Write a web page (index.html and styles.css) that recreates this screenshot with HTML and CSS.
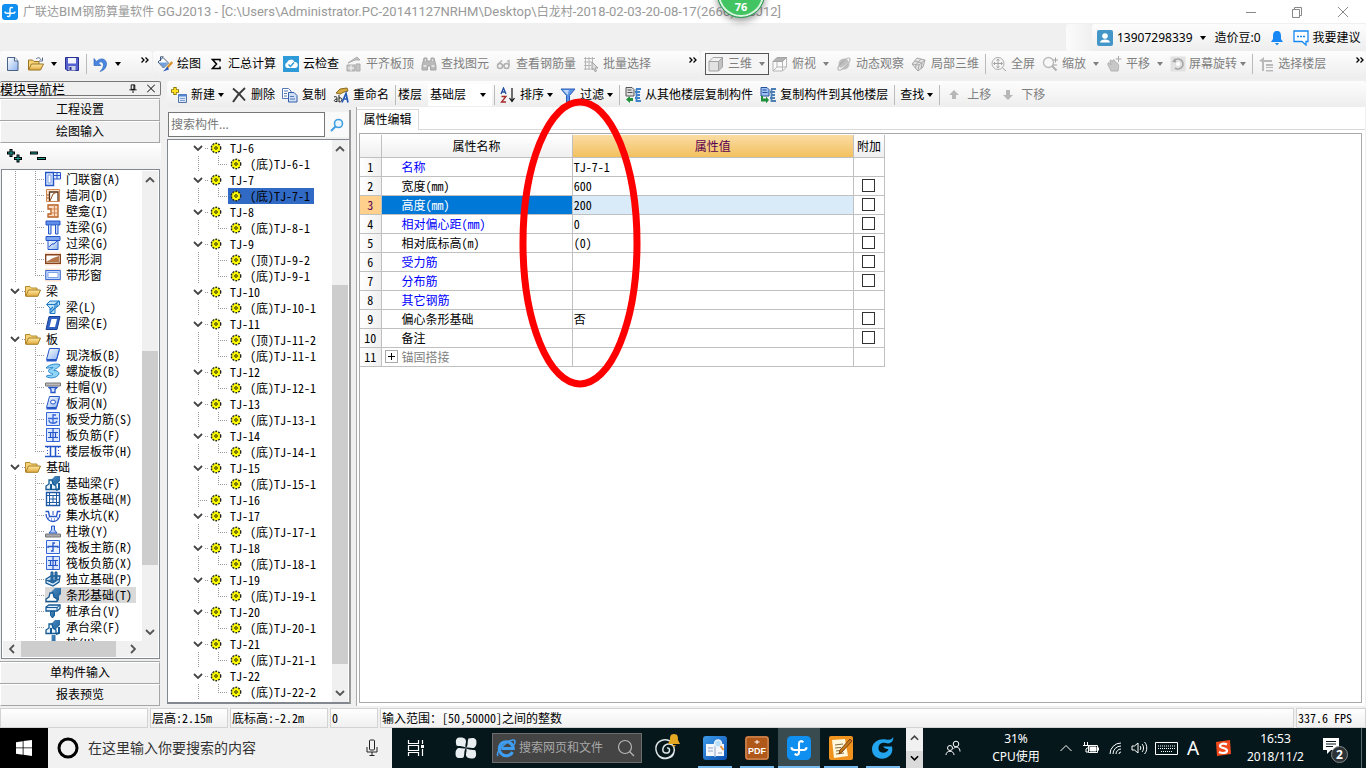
FILE: index.html
```html
<!DOCTYPE html>
<html lang="zh-CN">
<head>
<meta charset="utf-8">
<title>广联达BIM钢筋算量软件 GGJ2013</title>
<link rel="stylesheet" href="styles.css">
</head>
<body>
<svg class="sprite" aria-hidden="true">
  <defs>
    <linearGradient id="gBlue" x1="0" y1="0" x2="1" y2="1"><stop offset="0" stop-color="#fff"/><stop offset="1" stop-color="#8db4ee"/></linearGradient>
    <linearGradient id="gFold" x1="0" y1="0" x2="0" y2="1"><stop offset="0" stop-color="#ffe9a3"/><stop offset="1" stop-color="#e0a93c"/></linearGradient>
    <linearGradient id="gSteel" x1="0" y1="0" x2="1" y2="1"><stop offset="0" stop-color="#4f8fc4"/><stop offset="1" stop-color="#155a94"/></linearGradient>
    <linearGradient id="gPage" x1="0" y1="0" x2="1" y2="1"><stop offset="0" stop-color="#3d9be9"/><stop offset="1" stop-color="#0a4fb0"/></linearGradient>
  </defs>
  <symbol id="logo" viewBox="0 0 16 16"><rect width="16" height="16" rx="3" fill="#0f8ff0"/><path d="M10.800 4.200C10 3 8 3.200 8 5v6c0 1.800-2 2-2.800.800M3 7.500c0 1.200.800 1.800 2 1.800h6c1.200 0 2-.600 2-1.800" fill="none" stroke="#fff" stroke-width="1.400"/></symbol>
  <symbol id="new-doc" viewBox="0 0 16 16"><path d="M2.500 1.500h7.500l3 3.500v9.500H2.500z" fill="url(#gBlue)" stroke="#4a6186"/><path d="M9.500 1.500V5H13" fill="#fff" stroke="#4a6186"/></symbol>
  <symbol id="open" viewBox="0 0 16 16"><path d="M.500 14V4h4l1.500 1.500h5V8" fill="#f6d377" stroke="#9a7424"/><path d="M.500 14 3.500 8H15.500l-3 6z" fill="url(#gFold)" stroke="#9a7424"/><path d="M8 3c2-2 4-1.500 5 1M14.500 1.500V5H11" fill="none" stroke="#566d8e"/></symbol>
  <symbol id="folder" viewBox="0 0 16 16"><path d="M.500 13V3.500h4.500L6.500 5H12v3" fill="#f6d377" stroke="#b48a2e"/><path d="M.800 13.300 3.500 7H15.500L12.800 13.300z" fill="url(#gFold)" stroke="#a67c22"/></symbol>
  <symbol id="save" viewBox="0 0 16 16"><path d="M1.500 1.500h13v13H3L1.500 13z" fill="#5561cf" stroke="#26308f"/><path d="M4 2h8v5.500H4z" fill="#f4f6ff"/><path d="M4.500 10h7v4.500h-7z" fill="#cdd3e8"/><path d="M5.500 11h2v3h-2z" fill="#26308f"/></symbol>
  <symbol id="undo" viewBox="0 0 16 16"><path d="M4.500 5.500C8 1 15 2.500 14.500 8.500 14 12.500 11.500 14.500 8 15.500 12 12 12.500 7 9.500 6 8.500 5.600 7.500 6 6.800 7.300L9 9.500H2V2.500z" fill="#4a86e0" stroke="#225db5" stroke-width=".6"/></symbol>
  <symbol id="paint" viewBox="0 0 16 16"><path d="M1 6 6 1.500 11.500 7 6.500 12z" fill="#fff" stroke="#41587c"/><path d="M2 6.500h9L6.500 11.500z" fill="#6f9fdd"/><path d="M3.500 5V.800h3" fill="none" stroke="#41587c"/><path d="M15.200 6 10 12" stroke="#d9952a" stroke-width="2.400"/><path d="M10.500 10.500 6 15.500l6-2z" fill="#2b5ec0"/></symbol>
  <symbol id="sigma" viewBox="0 0 16 16"><path d="M12 5.500V3.500H4.500l4 4.500-4 4.500H12v-2" fill="none" stroke="#000" stroke-width="1.600"/></symbol>
  <symbol id="cloud" viewBox="0 0 16 16"><rect width="16" height="16" fill="#2e9ad8"/><path d="M4 12a3 3 0 0 1 0-5.500A4 4 0 0 1 11.500 6 3 3 0 0 1 12 12z" fill="#fff"/><path d="m5.500 8.500 2 2 3.500-4" fill="none" stroke="#2e9ad8" stroke-width="1.400"/></symbol>
  <symbol id="align" viewBox="0 0 16 16"><path d="M1 9h8v6H1zM2 7l9-6 3 3H9zM10 8h4v7h-4z" fill="#c4c4c4" stroke="#ababab"/><path d="M2 12h6M5 9v6" stroke="#f5f5f5"/></symbol>
  <symbol id="binoc" viewBox="0 0 16 16"><path d="M3 2h3v3h4V2h3l2 8v4H9.500v-4h-3v4H1v-4z" fill="#b9b9b9" stroke="#a5a5a5"/><path d="M2.500 10h3M10.500 10h3M4 4h1M11 4h1" stroke="#eee" stroke-width="1.500"/></symbol>
  <symbol id="glasses" viewBox="0 0 16 16"><circle cx="4" cy="10" r="2.500" fill="none" stroke="#b0b0b0" stroke-width="1.500"/><circle cx="10.500" cy="10" r="2.500" fill="none" stroke="#b0b0b0" stroke-width="1.500"/><path d="M1.800 8.500 6 4.500M6.500 9.500h2M13 9.500V4.500l-2 1" fill="none" stroke="#b0b0b0" stroke-width="1.300"/></symbol>
  <symbol id="batch" viewBox="0 0 16 16"><path d="M1 2.500h11M1 6h9M1 9.500h7M1 13h7M2.500 1v13M6 1v13M9.500 1v6" stroke="#b5b5b5" fill="none"/><path d="m9 6 6 6h-3l1.500 3-1.500.5-1.500-3L9 14z" fill="#ddd" stroke="#9e9e9e"/></symbol>
  <symbol id="cube" viewBox="0 0 16 16"><path d="M1 5.500h9.500V15H1z" fill="#e2e2e2" stroke="#a3a3a3"/><path d="M1 5.500 5 1.500h9.500l-4 4z" fill="#f1f1f1" stroke="#a3a3a3"/><path d="M10.500 5.500l4-4V11l-4 4z" fill="#c2c2c2" stroke="#a3a3a3"/></symbol>
  <symbol id="cubetop" viewBox="0 0 16 16"><path d="M1 5.500h9.500V15H1zM10.500 5.500l4-4V11l-4 4zM5 5v6M1 15l4-4h9" fill="#fafafa" stroke="#b5b5b5"/><path d="M1 5.500 5 1.500h9.500l-4 4z" fill="#b2b2b2" stroke="#a3a3a3"/></symbol>
  <symbol id="orbit" viewBox="0 0 16 16"><circle cx="8" cy="8" r="5.500" fill="#bfbfbf"/><path d="M3 13c3 0 9-4 11-9" fill="none" stroke="#f5f5f5" stroke-width="1.600"/><ellipse cx="8" cy="8" rx="8" ry="2.600" transform="rotate(-45 8 8)" fill="none" stroke="#aaa"/></symbol>
  <symbol id="local3d" viewBox="0 0 16 16"><path d="m1 8 5-6 8 2-2 7-5 4z" fill="#e3e3e3" stroke="#a9a9a9"/><path d="m1 8 7 1 6-5M8 9l-1 6M3.500 5l7 2M10 3 5 8.500l-.5 4M11 7l-1 6" fill="none" stroke="#a9a9a9"/></symbol>
  <symbol id="fullview" viewBox="0 0 16 16"><circle cx="7" cy="7.500" r="6" fill="#f5f5f5" stroke="#adadad"/><path d="M7 3v9M2.500 7.500h9M5.500 4.500 7 3l1.500 1.500M5.500 10.500 7 12l1.500-1.500M4 6 2.500 7.500 4 9M10 6l1.500 1.500L10 9M11.500 12l3.500 3" fill="none" stroke="#a3a3a3"/></symbol>
  <symbol id="zoomer" viewBox="0 0 16 16"><circle cx="6.500" cy="6.500" r="5" fill="#f8f8f8" stroke="#bababa" stroke-width="1.300"/><path d="m10 10 4.500 4.500" stroke="#b0b0b0" stroke-width="2"/><path d="M11 4h5M13.500 1.500v5M11 9h4" stroke="#a3a3a3"/></symbol>
  <symbol id="hand" viewBox="0 0 16 16"><path d="M2 7c1-1 2 0 3 2L4 4.500c1-1 2 0 2.500 1.500L7 4c1-.5 2 .5 2 2l2 1c2 1 2 3 1 8H5C4 12 1 9 2 7z" fill="#c8c8c8" stroke="#b1b1b1"/><path d="M12.500 0v6M9.500 3h6" stroke="#aaa"/></symbol>
  <symbol id="rotate" viewBox="0 0 16 16"><rect x=".5" y=".5" width="15" height="15" fill="#e2e2e2"/><path d="M4 5a5 5 0 1 1 1 7" fill="none" stroke="#a7a7a7" stroke-width="1.600"/><path d="m2 6 3-4 1.500 4.500z" fill="#a7a7a7"/><circle cx="8" cy="8" r="2" fill="#fff"/></symbol>
  <symbol id="floors" viewBox="0 0 16 16"><path d="m1 5 5-4v3h8v2H6v9H4V6zM8 8h7v2H8zM8 11h7v1H8zM8 14h7v1.500H8z" fill="#b9b9b9"/></symbol>
  <symbol id="add-item" viewBox="0 0 16 16"><path d="M4 0v8M0 4h8" stroke="#8d7a00" stroke-width="3.400"/><path d="M4 1v6M1 4h6" stroke="#ffe324" stroke-width="1.800"/><path d="M7.500 7.500h8v8h-8z" fill="#dbe8fb" stroke="#5574a5"/><path d="M7.500 7.500h8v2h-8z" fill="#5486d8"/><path d="M9 11.500h5M9 13.500h5" stroke="#7d9dd0"/></symbol>
  <symbol id="del" viewBox="0 0 16 16"><path d="M2 1.500c4 3 8 7 12 12M14 1C8 6 5 10 2 15" fill="none" stroke="#3b3b3b" stroke-width="2"/></symbol>
  <symbol id="copy" viewBox="0 0 16 16"><path d="M.500 1.500h6L9 4v7.500H.500z" fill="#fff" stroke="#5479b8"/><path d="M6.500 5.500h5.500l3 3v6.500H6.500z" fill="#cfdff7" stroke="#345fa8"/><path d="M2 4h4M2 6.500h3M2 9h3M8 9.500h4M8 12h5" stroke="#5479b8"/></symbol>
  <symbol id="rename" viewBox="0 0 16 16"><path d="M3 6 7 2l7-1 1 3-4 1-4 2z" fill="#d6a941" stroke="#8a6b22"/><path d="M1 10c2-1 3 0 3 1v4M4 12c-3 0-4 3 0 2.500M6 8v7M6 11c4-1 4 4 0 4" fill="none" stroke="#222"/><path d="m9 15.500 4-9 2 9M10.500 12h4" fill="none" stroke="#2459b8" stroke-width="1.700"/></symbol>
  <symbol id="sort" viewBox="0 0 16 16"><path d="m1 7 2.500-6L6 7M2 5h3" fill="none" stroke="#234fa3" stroke-width="1.300"/><path d="M1.500 9.500H6L1.500 15H6" fill="none" stroke="#a52828" stroke-width="1.300"/><path d="M12 1v13M9.500 11l2.500 3.500 2.500-3.500" fill="none" stroke="#111" stroke-width="1.200"/></symbol>
  <symbol id="filter" viewBox="0 0 16 16"><path d="M1 2h14L9.500 8.500V14L6.500 15.500v-7z" fill="#5b93e8" stroke="#2a5db5"/><path d="M3 3h6L7.500 8z" fill="#bcd6fb"/></symbol>
  <symbol id="copyfrom" viewBox="0 0 16 16"><path d="M1 .5h6l2 2V9H1z" fill="#ddd" stroke="#555"/><path d="M2.500 3h4M2.500 5.500h5" stroke="#555"/><path d="M11 2h5M10 5h5M11 8h4M10 11h5M11 14h5M11.500 2v13" stroke="#3f83cc" stroke-width="1.800"/><path d="m1 12.500 4-3.500v2h3v3H5v2z" fill="#1e8f3b"/></symbol>
  <symbol id="copyto" viewBox="0 0 16 16"><path d="M1 .5h6l2 2V9H1z" fill="#9fc0f2" stroke="#234e98"/><path d="M2.500 3h4M2.500 5.500h5" stroke="#234e98"/><path d="M11 2h5M10 5h5M11 8h4M10 11h5M11 14h5M11.500 2v13" stroke="#4d7fb5" stroke-width="1.800"/><path d="m9 13-3-3.500v2H3V9H1v5.500h5v2z" fill="#1e8f3b"/></symbol>
  <symbol id="up" viewBox="0 0 10 10"><path d="m5 0 5 5H7v4H3V5H0z" fill="#b8b8b8"/></symbol>
  <symbol id="down" viewBox="0 0 10 10"><path d="m5 10 5-5H7V0H3v5H0z" fill="#b8b8b8"/></symbol>
  <symbol id="caret" viewBox="0 0 6 4"><path d="M0 0h6L3 4z" fill="currentColor"/></symbol>
  <symbol id="more" viewBox="0 0 8 6"><path d="m.500.500 2.500 2.500L.500 5.500M4.500.500 7 3 4.500 5.500" fill="none" stroke="#000" stroke-width="1.300"/></symbol>
  <symbol id="chev" viewBox="0 0 10 6"><path d="m1 1 4 4 4-4" fill="none" stroke="currentColor" stroke-width="1.800"/></symbol>
  <symbol id="gear" viewBox="0 0 16 16"><circle cx="8" cy="8" r="4.700" fill="#ff0" stroke="#222" stroke-width="1.400" stroke-dasharray="1.800 1.200"/><path d="M8 3v10M3 8h10M4.500 4.500l7 7M11.500 4.500l-7 7" stroke="#333" stroke-width=".7" stroke-dasharray="1.400 8"/><circle cx="8" cy="8" r="2.900" fill="#ff0"/><circle cx="8" cy="8" r="1.300" fill="#ff0" stroke="#111" stroke-width=".9"/></symbol>
  <symbol id="user" viewBox="0 0 16 16"><rect width="16" height="16" rx="2" fill="#4496c8"/><circle cx="8" cy="6" r="2.800" fill="#fff"/><path d="M3 12.500c0-4 10-4 10 0z" fill="#fff"/></symbol>
  <symbol id="bell" viewBox="0 0 14 16"><path d="M7 1c3 0 4 2 4 5v3l2 3H1l2-3V6c0-3 1-5 4-5z" fill="#1787f4"/><path d="M5 13h4l-2 2.500z" fill="#1787f4"/></symbol>
  <symbol id="chat" viewBox="0 0 16 16"><path d="M1 1h14v10.500h-2V15l-4-3.500H1z" fill="#fff" stroke="#1787f4" stroke-width="1.300"/><path d="M4 6.500h2M7 6.500h2M10 6.500h2" stroke="#1787f4" stroke-width="1.500"/></symbol>
  <symbol id="door" viewBox="0 0 16 16"><path d="M.500 1.500h8v13h-8z" fill="#dbe8ff" stroke="#2456c8" stroke-width="1.500"/><path d="M3 4h3v8H3z" fill="#fff" stroke="#789fe4"/><path d="M9 1.500h6.500V8H9M12 1.500V8M9 4.500h6.500" fill="#dbe8ff" stroke="#2456c8"/></symbol>
  <symbol id="hole" viewBox="0 0 16 16"><path d="M1.500 2.500h13v12h-13z" fill="#ffe2ca" stroke="#d08650"/><path d="M4.500 14V5h8.500v9" fill="#fff" stroke="#56351c" stroke-width="1.300"/><path d="m5 14 3-7 4-2M2 8h2M2 11h2" fill="none" stroke="#935020"/></symbol>
  <symbol id="niche" viewBox="0 0 16 16"><path d="M3 2h10v12H3v-3h3V6H3z" fill="#fbdcc3" stroke="#b65d20" stroke-width="1.300"/><path d="M9.500 2v12M6 6h7M6 10h7" stroke="#d28550"/></symbol>
  <symbol id="lbeam" viewBox="0 0 16 16"><path d="M1 2h14v4H1z" fill="#5f8de8" stroke="#2456c8"/><path d="M3.500 6v9h2.500V6M10.500 6v9h2.500V6" fill="#c3d8fb" stroke="#2456c8"/></symbol>
  <symbol id="gbeam" viewBox="0 0 16 16"><path d="M1 1.500h14v4H1z" fill="#7ea6f0" stroke="#2456c8"/><path d="M3 5.500h10v9H3z" fill="url(#gBlue)" stroke="#2456c8"/><path d="m4 12 3-3 2 0 3-3" fill="none" stroke="#2456c8"/></symbol>
  <symbol id="striphole" viewBox="0 0 16 16"><path d="M0 1.500h16v13H0z" fill="#ffe1d0"/><path d="M.700 3.700h14.600v8.600H.700z" fill="#fff" stroke="#87441c" stroke-width="1.400"/><path d="M1 11 8 7l6-2v6z" fill="#b5764a"/></symbol>
  <symbol id="stripwin" viewBox="0 0 16 16"><path d="M0 1.500h16v13H0z" fill="#ffe1d0"/><path d="M.700 3.500h14.600v9H.700z" fill="#c4d8fb" stroke="#3b6ad2"/><path d="M3 5.500h10v5H3z" fill="#fff" stroke="#7ea2e8"/></symbol>
  <symbol id="beam" viewBox="0 0 16 16"><path d="M1.500 5.500 5 2h9.500v4L10 9.500v5H5V9z" fill="#bfe3fb" stroke="#1d79c4"/><path d="M2 5.500h8L14 2M10 5.500v4M5 14 10 9M5 11l3-3M12 4v4" fill="none" stroke="#1d79c4" stroke-width="1.200"/></symbol>
  <symbol id="ring" viewBox="0 0 16 16"><path d="M4 1.500h11l-3 13H1z" fill="#2f62c4" stroke="#173f96"/><path d="M6.500 4H12l-2 8H4.500z" fill="#fff"/></symbol>
  <symbol id="slab" viewBox="0 0 16 16"><path d="M4.500 1.500h10l-3 11h-10z" fill="url(#gBlue)" stroke="#2456c8"/><path d="M1.500 12.500v2h10l3-10v-3l-3 11z" fill="#2456c8"/></symbol>
  <symbol id="spiral" viewBox="0 0 16 16"><path d="M1 5c3-4 12-5 14-3-1 3-6 4-6 5.500 3 0 5 1 5 3.500-2 4-9 5-13 2.500 1-2 5-.5 7-2C7 10 2 10 4 6.500c2-1 4-1 4-2C6 4 4 5.500 1 5z" fill="#8fd4f7" stroke="#2b87cc"/></symbol>
  <symbol id="cap" viewBox="0 0 16 16"><path d="M.500 4h15v3H.500z" fill="#bbb" stroke="#777"/><path d="m4 8.500 2 2v3h4v-3l2-2z" fill="#dce8ff" stroke="#2456c8" stroke-width="1.300"/></symbol>
  <symbol id="slabhole" viewBox="0 0 16 16"><path d="M4.500 1.500h10l-3 11h-10z" fill="url(#gBlue)" stroke="#2456c8"/><path d="M1.500 12.500v2h10l3-10v-3l-3 11z" fill="#2456c8"/><ellipse cx="8" cy="7" rx="2.500" ry="2" fill="#fff" stroke="#2456c8"/></symbol>
  <symbol id="rebar1" viewBox="0 0 16 16"><path d="M1.500 1.500h13v13h-13z" fill="#dce8ff" stroke="#3567d8"/><path d="M3 7.500h10M8 3v10M4 9c0 4 7 4 8 1M8 4h3" fill="none" stroke="#3567d8" stroke-width="1.300"/></symbol>
  <symbol id="rebar2" viewBox="0 0 16 16"><path d="M1.500 1.500h13v13h-13z" fill="#dce8ff" stroke="#3567d8"/><path d="M3 5.500h10M3 10.500h10M5.500 5v6M10.500 5v6M8 1v14" fill="none" stroke="#2456c8" stroke-width="1.200"/></symbol>
  <symbol id="rebar3" viewBox="0 0 16 16"><path d="M1.500 1.500h13v13h-13z" fill="#e8f0ff" stroke="#3567d8"/><path d="M10 4H8v8H6M3 9V7.500h10V9" fill="none" stroke="#2456c8" stroke-width="1.300"/></symbol>
  <symbol id="band" viewBox="0 0 16 16"><path d="M0 3.500h16M0 13.500h16" stroke="#2456c8" stroke-width="1.500"/><path d="M5.500 4v9M10.500 4v9" stroke="#2456c8" stroke-width="1.500"/><path d="M2.500 4v9M13.500 4v9" stroke="#2456c8" stroke-dasharray="1 2"/></symbol>
  <symbol id="fbeam" viewBox="0 0 16 16"><path d="M5 6 10 1h5v5l-4 4v4H5z" fill="url(#gSteel)"/><path d="M1 14.500V11l3-2V5h3l1 4 3 2v3.500z" fill="#e9f3fc" stroke="#155a94" stroke-width="1.300"/><path d="M6 9v5M14 8v6l-3 1" fill="none" stroke="#155a94" stroke-width="2"/></symbol>
  <symbol id="raft" viewBox="0 0 16 16"><path d="M1.500 1.500h13v13h-13z" fill="#fff" stroke="#1d5aa6" stroke-width="1.400"/><path d="M4.500 4.500h7v7h-7zM4.500 1v14M11.500 1v14M1 4.500h14M1 11.500h14M8 5v6M5 8h6" fill="none" stroke="#1d5aa6"/></symbol>
  <symbol id="pit" viewBox="0 0 16 16"><path d="M.500 4.500h3l1 5h7l1-5h3M1 7c0 10 14 10 14 0" fill="none" stroke="#2456c8" stroke-width="1.300"/><path d="M3 11h1M6 12h1M9 12h1M12 11h1M6 14h1M9 14h1M8 8V4" stroke="#2456c8"/></symbol>
  <symbol id="pier" viewBox="0 0 16 16"><path d="M.500 11h15v3H.500z" fill="#aaa" stroke="#777"/><path d="M6.500 3h3v4l2.500 3H4l2.500-3z" fill="#b8d0fa" stroke="#2456c8"/></symbol>
  <symbol id="isolated" viewBox="0 0 16 16"><path d="M1 8 6 5h9l-1 6-6 4-7-3z" fill="#cfe4f7" stroke="#155a94" stroke-width="1.300"/><path d="M6 1h2v8H6zM10 1h2v7h-2zM1 9l7 3 6-4" fill="url(#gSteel)" stroke="#155a94"/></symbol>
  <symbol id="strip" viewBox="0 0 16 16"><path d="M6 5 10 1h6v6l-2 2v4l-3 2z" fill="url(#gSteel)"/><path d="M1 14.500V12l3-2 1-4h3l1 4 3 2v2.500z" fill="#fff" stroke="#155a94" stroke-width="1.300"/></symbol>
  <symbol id="pilecap" viewBox="0 0 16 16"><path d="M1 4 4 2h11v3.500L12 8H1z" fill="#dcebf9" stroke="#155a94" stroke-width="1.300"/><path d="M1 4.500h11L15 2M12 4v4" fill="none" stroke="#155a94"/><path d="M5.500 8.500h4v4l-2 2.500-2-2.500z" fill="url(#gSteel)" stroke="#155a94"/></symbol>
  <symbol id="pile" viewBox="0 0 16 16"><path d="M6.500 0h4v14h-4z" fill="url(#gSteel)"/></symbol>
</svg>

<div class="app">
  <header class="titlebar">
    <svg class="ico"><use href="#logo"/></svg>
    <h1><span>广联达</span>BIM<span>钢筋算量软件</span> GGJ2013 - [C:\Users\Administrator.PC-20141127NRHM\Desktop\<span>白龙村</span>-2018-02-03-20-08-17(2666).GGJ12]</h1>
    <div class="winbtns">
      <button aria-label="最小化"><svg viewBox="0 0 12 12"><path d="M1 6.500h10"/></svg></button>
      <button aria-label="还原"><svg viewBox="0 0 12 12"><path d="M1.500 3.500h7v8h-7zM3.500 3.500v-2h7v8h-2"/></svg></button>
      <button aria-label="关闭"><svg viewBox="0 0 12 12"><path d="m1 1 10 10M11 1 1 11"/></svg></button>
    </div>
    <div class="ball">76</div>
  </header>

  <div class="menurow">
    <div class="strip blank"></div>
    <div class="strip account">
      <button class="tb"><svg class="ico"><use href="#user"/></svg>13907298339<svg class="caret"><use href="#caret"/></svg></button>
      <span>造价豆:0</span>
      <button class="tb plain" aria-label="消息"><svg class="bell"><use href="#bell"/></svg></button>
      <button class="tb plain"><svg class="ico"><use href="#chat"/></svg>我要建议</button>
    </div>
  </div>

  <div class="barrow">
    <div class="strip filebar">
      <button class="tb" aria-label="新建工程"><svg class="ico"><use href="#new-doc"/></svg></button>
      <button class="tb" aria-label="打开"><svg class="ico"><use href="#open"/></svg><svg class="caret"><use href="#caret"/></svg></button>
      <button class="tb" aria-label="保存"><svg class="ico"><use href="#save"/></svg></button>
      <i class="sep"></i>
      <button class="tb" aria-label="撤销"><svg class="ico"><use href="#undo"/></svg><svg class="caret"><use href="#caret"/></svg></button>
      <button class="more" aria-label="更多"><svg><use href="#more"/></svg></button>
    </div>
    <div class="strip drawbar">
      <button class="tb"><svg class="ico"><use href="#paint"/></svg>绘图</button>
      <button class="tb"><svg class="ico"><use href="#sigma"/></svg>汇总计算</button>
      <button class="tb"><svg class="ico"><use href="#cloud"/></svg>云检查</button>
      <button class="tb off"><svg class="ico"><use href="#align"/></svg>平齐板顶</button>
      <button class="tb off"><svg class="ico"><use href="#binoc"/></svg>查找图元</button>
      <button class="tb off"><svg class="ico"><use href="#glasses"/></svg>查看钢筋量</button>
      <button class="tb off"><svg class="ico"><use href="#batch"/></svg>批量选择</button>
      <button class="more" aria-label="更多"><svg><use href="#more"/></svg></button>
    </div>
    <div class="strip viewbar">
      <button class="tb off boxed"><svg class="ico"><use href="#cube"/></svg>三维<svg class="caret"><use href="#caret"/></svg></button>
      <button class="tb off"><svg class="ico"><use href="#cubetop"/></svg>俯视<svg class="caret"><use href="#caret"/></svg></button>
      <button class="tb off"><svg class="ico"><use href="#orbit"/></svg>动态观察</button>
      <button class="tb off"><svg class="ico"><use href="#local3d"/></svg>局部三维</button>
      <i class="sep"></i>
      <button class="tb off"><svg class="ico"><use href="#fullview"/></svg>全屏</button>
      <button class="tb off"><svg class="ico"><use href="#zoomer"/></svg>缩放<svg class="caret"><use href="#caret"/></svg></button>
      <button class="tb off"><svg class="ico"><use href="#hand"/></svg>平移<svg class="caret"><use href="#caret"/></svg></button>
      <button class="tb off tight"><svg class="ico"><use href="#rotate"/></svg>屏幕旋转<svg class="caret"><use href="#caret"/></svg></button>
      <i class="sep"></i>
      <button class="tb off"><svg class="ico"><use href="#floors"/></svg>选择楼层</button>
      <button class="more" aria-label="更多"><svg><use href="#more"/></svg></button>
    </div>
  </div>

  <main class="body">
    <nav class="dock">
      <div class="dockhead"><span>模块导航栏</span>
        <button aria-label="固定"><svg viewBox="0 0 8 10"><path d="M2 1h4v5H2zM5 1v5M0 6.500h8M4 7v3"/></svg></button>
        <button aria-label="关闭"><svg viewBox="0 0 8 8"><path d="m0 0 8 8M8 0 0 8"/></svg></button>
      </div>
      <button class="acc">工程设置</button>
      <button class="acc">绘图输入</button>
      <div class="expandbar">
        <button aria-label="全部展开"><svg viewBox="0 0 16 14"><path d="M0 4h8M4 0v8M7 9.500h8M11 5.500v8" stroke="#000" stroke-width="3"/><path d="M1 4h6M4 1v6M8 9.500h6M11 6.500v6" stroke="#1f9d96"/></svg></button>
        <button aria-label="全部折叠"><svg viewBox="0 0 16 14"><path d="M0 4h8M7 9.500h9" stroke="#000" stroke-width="3"/><path d="M1 4h6M8 9.500h7" stroke="#1f9d96"/></svg></button>
      </div>
      <div class="navbox">
        <ul class="tree">
          <li><i class="v"></i><i class="t"></i><svg class="ico"><use href="#door"/></svg><span>门联窗(A)</span></li>
          <li><i class="v"></i><i class="t"></i><svg class="ico"><use href="#hole"/></svg><span>墙洞(D)</span></li>
          <li><i class="v"></i><i class="t"></i><svg class="ico"><use href="#niche"/></svg><span>壁龛(I)</span></li>
          <li><i class="v"></i><i class="t"></i><svg class="ico"><use href="#lbeam"/></svg><span>连梁(G)</span></li>
          <li><i class="v"></i><i class="t"></i><svg class="ico"><use href="#gbeam"/></svg><span>过梁(G)</span></li>
          <li><i class="v"></i><i class="t"></i><svg class="ico"><use href="#striphole"/></svg><span>带形洞</span></li>
          <li><i class="v"></i><i class="t end"></i><svg class="ico"><use href="#stripwin"/></svg><span>带形窗</span></li>
          <li><i class="x"><svg><use href="#chev"/></svg></i><svg class="ico"><use href="#folder"/></svg><span>梁</span></li>
          <li><i class="v"></i><i class="t"></i><svg class="ico"><use href="#beam"/></svg><span>梁(L)</span></li>
          <li><i class="v"></i><i class="t end"></i><svg class="ico"><use href="#ring"/></svg><span>圈梁(E)</span></li>
          <li><i class="x"><svg><use href="#chev"/></svg></i><svg class="ico"><use href="#folder"/></svg><span>板</span></li>
          <li><i class="v"></i><i class="t"></i><svg class="ico"><use href="#slab"/></svg><span>现浇板(B)</span></li>
          <li><i class="v"></i><i class="t"></i><svg class="ico"><use href="#spiral"/></svg><span>螺旋板(B)</span></li>
          <li><i class="v"></i><i class="t"></i><svg class="ico"><use href="#cap"/></svg><span>柱帽(V)</span></li>
          <li><i class="v"></i><i class="t"></i><svg class="ico"><use href="#slabhole"/></svg><span>板洞(N)</span></li>
          <li><i class="v"></i><i class="t"></i><svg class="ico"><use href="#rebar1"/></svg><span>板受力筋(S)</span></li>
          <li><i class="v"></i><i class="t"></i><svg class="ico"><use href="#rebar2"/></svg><span>板负筋(F)</span></li>
          <li><i class="v"></i><i class="t end"></i><svg class="ico"><use href="#band"/></svg><span>楼层板带(H)</span></li>
          <li><i class="x"><svg><use href="#chev"/></svg></i><svg class="ico"><use href="#folder"/></svg><span>基础</span></li>
          <li><i class="v"></i><i class="t"></i><svg class="ico"><use href="#fbeam"/></svg><span>基础梁(F)</span></li>
          <li><i class="v"></i><i class="t"></i><svg class="ico"><use href="#raft"/></svg><span>筏板基础(M)</span></li>
          <li><i class="v"></i><i class="t"></i><svg class="ico"><use href="#pit"/></svg><span>集水坑(K)</span></li>
          <li><i class="v"></i><i class="t"></i><svg class="ico"><use href="#pier"/></svg><span>柱墩(Y)</span></li>
          <li><i class="v"></i><i class="t"></i><svg class="ico"><use href="#rebar3"/></svg><span>筏板主筋(R)</span></li>
          <li><i class="v"></i><i class="t"></i><svg class="ico"><use href="#rebar2"/></svg><span>筏板负筋(X)</span></li>
          <li><i class="v"></i><i class="t"></i><svg class="ico"><use href="#isolated"/></svg><span>独立基础(P)</span></li>
          <li class="cur"><i class="v"></i><i class="t"></i><svg class="ico"><use href="#strip"/></svg><span>条形基础(T)</span></li>
          <li><i class="v"></i><i class="t"></i><svg class="ico"><use href="#pilecap"/></svg><span>桩承台(V)</span></li>
          <li><i class="v"></i><i class="t"></i><svg class="ico"><use href="#fbeam"/></svg><span>承台梁(F)</span></li>
          <li><i class="v"></i><i class="t"></i><svg class="ico"><use href="#pile"/></svg><span>桩(U)</span></li>
        </ul>
        <div class="vs navs"><svg class="au"><use href="#chev"/></svg><i class="sa"></i><i class="thumb"></i><i class="sb"></i><svg><use href="#chev"/></svg></div>
        <div class="hs"><svg class="al"><use href="#chev"/></svg><i class="thumb"></i><svg class="ar"><use href="#chev"/></svg></div>
      </div>
      <button class="acc">单构件输入</button>
      <button class="acc">报表预览</button>
    </nav>

    <section class="work">
      <div class="strip itembar">
        <button class="tb"><svg class="ico"><use href="#add-item"/></svg>新建<svg class="caret"><use href="#caret"/></svg></button>
        <button class="tb"><svg class="ico"><use href="#del"/></svg>删除</button>
        <button class="tb"><svg class="ico"><use href="#copy"/></svg>复制</button>
        <button class="tb"><svg class="ico"><use href="#rename"/></svg>重命名</button>
        <i class="sep"></i>
        <label class="floor">楼层<span class="combo"><select><option>基础层</option></select><svg class="caret"><use href="#caret"/></svg></span></label>
        <i class="sep"></i>
        <button class="tb"><svg class="ico"><use href="#sort"/></svg>排序<svg class="caret"><use href="#caret"/></svg></button>
        <button class="tb"><svg class="ico"><use href="#filter"/></svg>过滤<svg class="caret"><use href="#caret"/></svg></button>
        <i class="sep"></i>
        <button class="tb"><svg class="ico"><use href="#copyfrom"/></svg>从其他楼层复制构件</button>
        <button class="tb"><svg class="ico"><use href="#copyto"/></svg>复制构件到其他楼层</button>
        <i class="sep"></i>
        <button class="tb">查找<svg class="caret"><use href="#caret"/></svg></button>
        <i class="sep"></i>
        <button class="tb off arrow"><svg><use href="#up"/></svg>上移</button>
        <button class="tb off arrow"><svg><use href="#down"/></svg>下移</button>
      </div>
      <div class="panes">
        <section class="parts">
          <div class="search"><input type="text" placeholder="搜索构件..." aria-label="搜索构件"><button aria-label="搜索"><svg viewBox="0 0 14 14"><circle cx="8.500" cy="5.500" r="4" fill="#e9f5ff" stroke="#3f9fe0" stroke-width="1.600"/><path d="M5.500 8.500 1 13" stroke="#3f9fe0" stroke-width="2"/></svg></button></div>
          <div class="partbox">
            <ul class="tree">
              <li><i class="x"><svg><use href="#chev"/></svg></i><svg class="ico"><use href="#gear"/></svg><span>TJ-6</span></li>
              <li><i class="v"></i><i class="t end"></i><svg class="ico"><use href="#gear"/></svg><span>(底)TJ-6-1</span></li>
              <li><i class="x"><svg><use href="#chev"/></svg></i><svg class="ico"><use href="#gear"/></svg><span>TJ-7</span></li>
              <li class="sel"><i class="v"></i><i class="t end"></i><svg class="ico"><use href="#gear"/></svg><span>(底)TJ-7-1</span></li>
              <li><i class="x"><svg><use href="#chev"/></svg></i><svg class="ico"><use href="#gear"/></svg><span>TJ-8</span></li>
              <li><i class="v"></i><i class="t end"></i><svg class="ico"><use href="#gear"/></svg><span>(底)TJ-8-1</span></li>
              <li><i class="x"><svg><use href="#chev"/></svg></i><svg class="ico"><use href="#gear"/></svg><span>TJ-9</span></li>
              <li><i class="v"></i><i class="t"></i><svg class="ico"><use href="#gear"/></svg><span>(顶)TJ-9-2</span></li>
              <li><i class="v"></i><i class="t end"></i><svg class="ico"><use href="#gear"/></svg><span>(底)TJ-9-1</span></li>
              <li><i class="x"><svg><use href="#chev"/></svg></i><svg class="ico"><use href="#gear"/></svg><span>TJ-10</span></li>
              <li><i class="v"></i><i class="t end"></i><svg class="ico"><use href="#gear"/></svg><span>(底)TJ-10-1</span></li>
              <li><i class="x"><svg><use href="#chev"/></svg></i><svg class="ico"><use href="#gear"/></svg><span>TJ-11</span></li>
              <li><i class="v"></i><i class="t"></i><svg class="ico"><use href="#gear"/></svg><span>(顶)TJ-11-2</span></li>
              <li><i class="v"></i><i class="t end"></i><svg class="ico"><use href="#gear"/></svg><span>(底)TJ-11-1</span></li>
              <li><i class="x"><svg><use href="#chev"/></svg></i><svg class="ico"><use href="#gear"/></svg><span>TJ-12</span></li>
              <li><i class="v"></i><i class="t end"></i><svg class="ico"><use href="#gear"/></svg><span>(底)TJ-12-1</span></li>
              <li><i class="x"><svg><use href="#chev"/></svg></i><svg class="ico"><use href="#gear"/></svg><span>TJ-13</span></li>
              <li><i class="v"></i><i class="t end"></i><svg class="ico"><use href="#gear"/></svg><span>(底)TJ-13-1</span></li>
              <li><i class="x"><svg><use href="#chev"/></svg></i><svg class="ico"><use href="#gear"/></svg><span>TJ-14</span></li>
              <li><i class="v"></i><i class="t end"></i><svg class="ico"><use href="#gear"/></svg><span>(底)TJ-14-1</span></li>
              <li><i class="x"><svg><use href="#chev"/></svg></i><svg class="ico"><use href="#gear"/></svg><span>TJ-15</span></li>
              <li><i class="v"></i><i class="t end"></i><svg class="ico"><use href="#gear"/></svg><span>(底)TJ-15-1</span></li>
              <li><i class="t"></i><svg class="ico"><use href="#gear"/></svg><span>TJ-16</span></li>
              <li><i class="x"><svg><use href="#chev"/></svg></i><svg class="ico"><use href="#gear"/></svg><span>TJ-17</span></li>
              <li><i class="v"></i><i class="t end"></i><svg class="ico"><use href="#gear"/></svg><span>(底)TJ-17-1</span></li>
              <li><i class="x"><svg><use href="#chev"/></svg></i><svg class="ico"><use href="#gear"/></svg><span>TJ-18</span></li>
              <li><i class="v"></i><i class="t end"></i><svg class="ico"><use href="#gear"/></svg><span>(底)TJ-18-1</span></li>
              <li><i class="x"><svg><use href="#chev"/></svg></i><svg class="ico"><use href="#gear"/></svg><span>TJ-19</span></li>
              <li><i class="v"></i><i class="t end"></i><svg class="ico"><use href="#gear"/></svg><span>(底)TJ-19-1</span></li>
              <li><i class="x"><svg><use href="#chev"/></svg></i><svg class="ico"><use href="#gear"/></svg><span>TJ-20</span></li>
              <li><i class="v"></i><i class="t end"></i><svg class="ico"><use href="#gear"/></svg><span>(底)TJ-20-1</span></li>
              <li><i class="x"><svg><use href="#chev"/></svg></i><svg class="ico"><use href="#gear"/></svg><span>TJ-21</span></li>
              <li><i class="v"></i><i class="t end"></i><svg class="ico"><use href="#gear"/></svg><span>(底)TJ-21-1</span></li>
              <li><i class="x"><svg><use href="#chev"/></svg></i><svg class="ico"><use href="#gear"/></svg><span>TJ-22</span></li>
              <li><i class="v"></i><i class="t end"></i><svg class="ico"><use href="#gear"/></svg><span>(底)TJ-22-2</span></li>
            </ul>
            <div class="vs parts-s"><svg class="au"><use href="#chev"/></svg><i class="sa"></i><i class="thumb"></i><i class="sb"></i><svg><use href="#chev"/></svg></div>
          </div>
        </section>

        <section class="props">
          <div class="tabs"><button class="tab">属性编辑</button></div>
          <div class="sheet">
            <table>
              <colgroup><col class="c-no"><col class="c-name"><col class="c-val"><col class="c-add"></colgroup>
              <thead><tr><th></th><th>属性名称</th><th class="hot">属性值</th><th>附加</th></tr></thead>
              <tbody>
                <tr><th>1</th><td class="name key">名称</td><td>TJ-7-1</td><td></td></tr>
                <tr><th>2</th><td class="name">宽度(mm)</td><td>600</td><td class="chk"><input type="checkbox" aria-label="附加 宽度"></td></tr>
                <tr class="active"><th>3</th><td class="name">高度(mm)</td><td>200</td><td class="chk"><input type="checkbox" aria-label="附加 高度"></td></tr>
                <tr><th>4</th><td class="name key">相对偏心距(mm)</td><td>0</td><td class="chk"><input type="checkbox" aria-label="附加 相对偏心距"></td></tr>
                <tr><th>5</th><td class="name">相对底标高(m)</td><td>(0)</td><td class="chk"><input type="checkbox" aria-label="附加 相对底标高"></td></tr>
                <tr><th>6</th><td class="name key">受力筋</td><td></td><td class="chk"><input type="checkbox" aria-label="附加 受力筋"></td></tr>
                <tr><th>7</th><td class="name key">分布筋</td><td></td><td class="chk"><input type="checkbox" aria-label="附加 分布筋"></td></tr>
                <tr><th>8</th><td class="name key">其它钢筋</td><td></td><td></td></tr>
                <tr><th>9</th><td class="name">偏心条形基础</td><td>否</td><td class="chk"><input type="checkbox" aria-label="附加 偏心条形基础"></td></tr>
                <tr><th>10</th><td class="name">备注</td><td></td><td class="chk"><input type="checkbox" aria-label="附加 备注"></td></tr>
                <tr><th>11</th><td class="name group"><div><button aria-label="展开"><svg viewBox="0 0 11 11"><path d="M2 5.500h7M5.500 2v7"/></svg></button>锚固搭接</div></td><td></td><td></td></tr>
              </tbody>
            </table>
          </div>
        </section>
      </div>
    </section>
  </main>

  <footer class="status">
    <span class="s1"></span><span class="s2">层高:2.15m</span><span class="s3">底标高:-2.2m</span><span class="s4">0</span><span class="s5">输入范围：[50,50000]之间的整数</span><span class="s6">337.6 FPS</span>
  </footer>

  <div class="taskbar">
    <button class="start" aria-label="开始"><svg viewBox="0 0 16 16"><path d="M0 2.200 6.700 1.200v6.300H0zM7.500 1.100 16 0v7.500H7.500zM0 8.300h6.700v6.400L0 13.700zM7.500 8.300H16V16l-8.500-1.200z" fill="#fff"/></svg></button>
    <label class="cortana"><svg viewBox="0 0 22 22" class="ringic"><circle cx="11" cy="11" r="9" fill="none" stroke="#000" stroke-width="3"/></svg><input type="text" placeholder="在这里输入你要搜索的内容"><svg class="mic" viewBox="0 0 12 18"><rect x="3.500" y="1" width="5" height="10" rx="1" fill="none" stroke="#222"/><path d="M1 8v5h10V8M6 13v3M3.500 16.500h5" fill="none" stroke="#222"/></svg></label>
    <button class="tv" aria-label="任务视图"><svg viewBox="0 0 18 16" width="18" height="16"><path d="M1.500 0v3.500h10V0M1.500 16v-3.500h10V16M1.500 5.500h10v5h-10zM15.500 0v4M15.500 9v7" fill="none" stroke="#fff" stroke-width="1.200"/><path d="M14 5h3v3h-3z" fill="#fff"/></svg></button>
    <button class="pin" aria-label="风车"><svg viewBox="0 0 22 22" width="22" height="22"><g fill="#e9eef1"><path id="petal" d="M10.800 10.800C8 8.500 5 10 1.500 8.500.500 5 .500 2 3 .800 6 .300 9 .300 10.500 2.500 12 5 9.500 8 10.800 10.800z"/><use href="#petal" transform="rotate(90 11 11)"/><use href="#petal" transform="rotate(180 11 11)"/><use href="#petal" transform="rotate(270 11 11)"/></g></svg></button>
    <label class="iebox"><svg viewBox="0 0 20 20" width="20" height="20"><path d="M16.500 14A7 7 0 1 1 17.300 10.500H5.500" fill="none" stroke="#3f9df0" stroke-width="3"/><path d="M2 18C-1 14 12 1 18 2c2 1 1 3 0 5" fill="none" stroke="#3f9df0" stroke-width="1.600"/></svg><input type="text" placeholder="搜索网页和文件"><svg viewBox="0 0 18 18" width="18" height="18"><circle cx="8" cy="8" r="6.500" fill="none" stroke="#b5b5b5" stroke-width="1.200"/><path d="m12.500 12.500 4.500 4.500" stroke="#b5b5b5" stroke-width="1.200"/></svg></label>
    <button class="swirl" aria-label="助手"><svg viewBox="0 0 32 30" width="32" height="30"><path d="M18 8C10 4 3 10 4 17s9 11 15 6 3-13-3-12-7 9-2 9 4-6 1-5M6 22c5 6 15 4 16-3" fill="none" stroke="#dfe7ea" stroke-width="1.500"/><path d="M22 1c4 0 4 3 4 6l2 4H16l2-4c0-3 0-6 4-6zM20 12h4l-2 2z" fill="#e5a822"/></svg></button>
    <button class="app-ic" aria-label="图书"><svg viewBox="0 0 24 24"><rect width="24" height="24" rx="3" fill="url(#gPage)"/><path d="M3 8h8l1 1 1-1h8v12h-8l-1 1-1-1H3z" fill="#f6f7fb"/><path d="M12 9v12M5 12h5M5 15h5M15 17h4" stroke="#8ba3c9"/><circle cx="15" cy="7.500" r="3.500" fill="#b9defa" stroke="#e8f2fb" stroke-width="1.500"/><path d="m17.500 10 3 4" stroke="#e8963a" stroke-width="2"/></svg></button>
    <button class="app-ic" aria-label="PDF"><svg viewBox="0 0 24 24"><rect width="24" height="24" rx="3" fill="#b0581a"/><rect x="1" y="1" width="22" height="22" rx="2" fill="none" stroke="#d8996b"/><text x="12" y="18" text-anchor="middle" class="pdf">PDF</text><path d="M12 4v4M9.500 6h5" stroke="#fff"/></svg></button>
    <button class="app-ic on" aria-label="广联达"><svg viewBox="0 0 16 16"><use href="#logo"/></svg></button>
    <button class="app-ic" aria-label="便签"><svg viewBox="0 0 24 24"><rect width="24" height="24" rx="2" fill="#f0921e"/><path d="m3 4 13-1 3 17-14 2z" fill="#fff8dc"/><path d="m6 9 8-1M6 12l6-.5M7 15l8-1M7 18l8-1" stroke="#8a6b3b"/><path d="M21 3 11 14l-1 4 3-2L23 5z" fill="#c47a1a" stroke="#7e3d0c"/></svg></button>
    <button class="app-ic" aria-label="G浏览器"><svg viewBox="0 0 24 24"><path d="M22 1c-1 3-4 3-7 2.500C7 2 1 7 1 13c0 7 6 10.500 12 9.500 6-1 9.500-6 8-12H12c1.500 2 3.500 2.500 5.500 2.500-1 5-10 5-10-.5C7.500 7 12 6 17 7.500 21 7 23 4 22 1z" fill="#22a4ee"/></svg></button>
    <div class="pager"><svg class="au"><use href="#chev"/></svg><svg><use href="#chev"/></svg></div>
    <div class="tray">
      <button class="w48" aria-label="人脉"><svg viewBox="0 0 16 16" width="16" height="16"><circle cx="11" cy="4" r="2.800"/><circle cx="5" cy="8" r="2.500"/><path d="M1 15c0-5 8-5 8 0M8.500 8.500c3-3 6.500-1 6.500 3"/></svg></button>
      <div class="cpu"><span>31%</span><span>CPU使用</span></div>
      <button class="w22" aria-label="显示隐藏的图标"><svg viewBox="0 0 12 8" width="12" height="8"><path d="m.500 7 5.500-5.500L11.500 7"/></svg></button>
      <button class="w27" aria-label="电源"><svg viewBox="0 0 16 12" width="16" height="12"><path d="M5.500 3.500h9v7h-9zM15.500 5.500v3M1.500 0v3M4.500 0v3M0 3.500h6v1.500L3 7v3h2"/><path d="M7 5h6v4H7z" fill="#fff"/></svg></button>
      <button class="w22" aria-label="网络"><svg viewBox="0 0 13 13" width="13" height="13"><path d="M1 12A11 11 0 0 1 12 1M4 12a8 8 0 0 1 8-8M7 12a5 5 0 0 1 5-5M10 12a2 2 0 0 1 2-2"/></svg></button>
      <button class="w26" aria-label="音量"><svg viewBox="0 0 17 14" width="17" height="14"><path d="M1 5h2.500L7 2v10L3.500 9H1zM9 5c1 1 1 3 0 4M11 3c2 2 2 6 0 8M13.500 1c3 3 3 9 0 12"/></svg></button>
      <button class="w28" aria-label="触摸键盘"><svg viewBox="0 0 23 13" width="23" height="13"><path d="M.500.500h22v12H.500z"/><path d="M3 4h17M3 6.500h17M6 9.500h11" stroke-dasharray="1 1"/></svg></button>
      <span class="ime">A</span>
      <button class="w33" aria-label="搜狗输入法"><svg viewBox="0 0 16 16" width="16" height="16"><path d="M1 2 15 0l1 14L2 16z" fill="#f04a1d" stroke="none"/><path d="M12 4.500C9 3 5 3.500 5 6s7 1.500 7 4.500-5 3-8 1.500" stroke="#fff" stroke-width="2.200"/></svg></button>
      <div class="clock"><span>16:53</span><span>2018/11/2</span></div>
      <button class="note" aria-label="操作中心"><svg viewBox="0 0 16 16" width="16" height="16"><path d="M0 0h16v12H8l-4 4v-4H0z" fill="#fff" stroke="none"/><path d="M3 3.500h10M3 6h10M3 8.500h7" stroke="#0a1a1e"/></svg><b>2</b></button>
      <i class="peek"></i>
    </div>
  </div>

  <svg class="mark" viewBox="0 0 122 290" aria-hidden="true"><ellipse cx="61" cy="145" rx="57" ry="141" fill="none" stroke="#f00" stroke-width="7"/></svg>
</div>
</body>
</html>
```
FILE: styles.css
```css
* { box-sizing: border-box; }
body {
  margin: 0;
  background: #f0f0f0;
  color: #000;
  font: 12px/16px "Noto Sans", "Noto Sans CJK SC", sans-serif;
}
button, input, select { font: inherit; color: inherit; margin: 0; }
button { background: none; border: 0; padding: 0; white-space: nowrap; }
svg { flex: none; display: block; }
.sprite { position: absolute; width: 0; height: 0; }
.app { position: relative; display: flex; flex-direction: column; height: 100vh; overflow: hidden; }
.ico { width: 16px; height: 16px; }
.caret { width: 6px; height: 4px; margin-left: 3px; }

/* title bar */
.titlebar { position: relative; display: flex; align-items: center; flex: none; height: 23px; padding-left: 2px; background: #fff; }
.titlebar h1 { flex: 1; margin: 0 0 0 5px; font: 400 13px/16px Roboto, "Noto Sans CJK SC", sans-serif; color: #999; white-space: nowrap; overflow: hidden; }
.titlebar h1 span { font-size: 12px; }
.winbtns { display: flex; }
.winbtns button { width: 46px; height: 22px; display: grid; place-items: center; }
.winbtns svg { width: 12px; height: 12px; fill: none; stroke: #888; }
.ball {
  position: absolute; left: 717px; top: -30px; width: 48px; height: 48px;
  padding: 28px 0 0; border: 1px solid #2f9a58; border-radius: 50%;
  background: #43c463; box-shadow: inset 0 0 0 2px #d9f3df, 0 3px 7px #0006;
  color: #fff; font-size: 11px; font-weight: 700; text-align: center;
}

/* toolbars */
.strip { display: flex; align-items: center; background: linear-gradient(#fdfdfd, #f4f4f4 60%, #ededed); border-radius: 3px; }
.menurow { display: flex; justify-content: flex-end; flex: none; height: 28px; padding-top: 1px; }
.blank { width: 26px; background: linear-gradient(90deg, #fbfbfb, #f0f0f0); }
.account { width: 274px; padding-left: 2px; }
.account .tb { padding-right: 9px; }
.account .plain { padding: 0 0 0 9px; }
.bell { width: 14px; height: 16px; }
.barrow { display: flex; gap: 1px; flex: none; height: 28px; }
.barrow .strip { padding-bottom: 2px; }
.filebar { width: 152px; padding-left: 2px; }
.drawbar { width: 547px; padding-left: 1px; }
.viewbar { flex: 1; padding-left: 4px; }
.tb { display: flex; align-items: center; gap: 4px; padding: 0 4px 0 3px; height: 22px; white-space: nowrap; }
.off { color: #808080; }
.boxed { border: 1px solid #555; padding: 0 3px 0 2px; background: #f5f5f5; }
.tight { gap: 3px; }
.tight .caret { margin-left: 0; }
.sep { width: 1px; height: 20px; margin: 0 2px; background: #bbb; flex: none; }
.more { margin: 0 2px 8px auto; }
.more svg { width: 8px; height: 6px; }
.filebar .more, .drawbar .more { margin-right: 3px; }
.itembar { height: 26px; flex: none; padding: 1px 0 0 1px; }
.itembar .caret { margin-left: -1px; }
.floor { display: flex; align-items: center; gap: 6px; }
.combo { display: flex; align-items: center; height: 22px; width: 64px; padding: 0 6px 0 2px; background: #fff; }
.combo select { appearance: none; border: 0; background: none; padding: 0; flex: 1; min-width: 0; outline: 0; }
.arrow { gap: 8px; padding: 0 5px 0 7px; }
.arrow svg { width: 10px; height: 10px; }

/* left dock */
.body { flex: 1; display: flex; gap: 5px; min-height: 0; padding: 2px 0; }
.dock { width: 162px; display: flex; flex-direction: column; padding-right: 1px; flex: none; }
.dockhead { display: flex; align-items: center; height: 15px; border: 1px solid #777; border-left: 0; border-radius: 2px; font-size: 13px; margin-bottom: 3px; flex: none; }
.dockhead span { flex: 1; }
.dockhead button { width: 18px; display: grid; place-items: center; }
.dockhead svg { width: 8px; height: 9px; fill: none; stroke: #000; }
.acc { height: 22px; flex: none; border: 1px solid #a5a5a5; border-top-color: #fff; border-left-color: #fff; background: #f1f1f1; box-shadow: 0 -1px #a5a5a5; text-align: center; margin-right: 1px; }
.expandbar { display: flex; gap: 7px; align-items: center; height: 26px; flex: none; padding-left: 7px; background: linear-gradient(#fff, #f0f0f0); }
.expandbar svg { width: 16px; height: 14px; fill: none; }
.navbox { flex: 1; min-height: 0; display: grid; grid-template: minmax(0, 1fr) 16px / minmax(0, 1fr) 16px; margin: 0 1px 3px 1px; padding: 1px; border: 1px solid #828790; background: #fff; }
.navbox .tree { padding-left: 2px; }
.hs { display: flex; align-items: center; grid-column: 1 / 3; background: #f0f0f0; color: #555; }
.hs svg { width: 10px; height: 6px; margin: 0 4px; }
.hs .thumb { width: 95px; height: 16px; }
.al { transform: rotate(90deg); }
.ar { transform: rotate(-90deg); }
.au { transform: rotate(180deg); }
.hs .ar { margin-left: 12px; }
.vs { display: flex; flex-direction: column; align-items: center; padding: 6px 0; background: #f0f0f0; color: #555; min-height: 0; }
.vs svg { width: 10px; height: 6px; margin: 0 0 4px; }
.vs svg:last-child { margin: 4px 0 0; }
.thumb { background: #cdcdcd; align-self: stretch; }
.navs .sa { flex: 164; } .navs .thumb { flex: 214; } .navs .sb { flex: 60; }
.parts-s .sa { flex: 129; } .parts-s .thumb { flex: 377; } .parts-s .sb { flex: 22; }

/* trees */
.tree { list-style: none; margin: 0; padding: 0; overflow: hidden; font-family: "Noto Sans Mono CJK SC", "Liberation Mono", "Noto Sans CJK SC", monospace; }
.tree li { display: flex; height: 16px; align-items: center; white-space: nowrap; }
.tree span { line-height: 16px; padding: 0 4px 0 5px; }
.tree i { width: 20px; height: 16px; flex: none; position: relative; }
.v, .t { background: repeating-linear-gradient(#999 0 1px, transparent 1px 2px) 10px 0 / 1px 100% no-repeat; }
.t.end { background-size: 1px 8px; }
.t::after, .x::after { content: ""; position: absolute; top: 8px; right: 0; width: 10px; height: 1px; background: repeating-linear-gradient(90deg, #999 0 1px, transparent 1px 2px); }
.x::after { width: 3px; }
.x svg { width: 10px; height: 6px; margin: 5px 0 0 5px; color: #444; }
.cur span, .cur .ico { background: #d9d9d9; }
.sel span, .sel .ico { background: #316ac5; }

/* component list */
.work { flex: 1; min-width: 0; display: flex; flex-direction: column; }
.panes { flex: 1; min-height: 0; display: flex; gap: 5px; }
.parts { width: 184px; flex: none; margin: 3px 0 2px; display: flex; flex-direction: column; border-right: 2px solid #999; border-bottom: 1px solid #828790; }
.search { display: flex; height: 29px; flex: none; padding: 2px 0 2px 1px; }
.search input { flex: 1; min-width: 0; border: 1px solid #777; padding: 0 2px; background: #fff; outline: 0; font-size: 12px; }
.search input::placeholder { color: #777; opacity: 1; }
.search button { width: 24px; display: grid; place-items: center; background: #fafafa; }
.search svg { width: 14px; height: 14px; fill: none; }
.partbox { flex: 1; min-height: 0; display: grid; grid-template-columns: minmax(0, 1fr) 16px; border: solid #828790; border-width: 1px 0 1px 1px; padding: 0 1px 0 0; background: #fff; }
.partbox .tree { padding-left: 20px; }
.parts .tree span { padding-left: 6px; }

/* property sheet */
.props { flex: 1; min-width: 0; display: flex; flex-direction: column; background: #fff; border-left: 1px solid #aaa; margin-right: 1px; }
.tabs { height: 23px; display: flex; align-items: flex-end; border-bottom: 1px solid #d9d9d9; flex: none; }
.tab { height: 21px; width: 62px; border-right: 1px solid #d9d9d9; border-top: 1px solid #d9d9d9; background: #fff; margin-bottom: -1px; }
.sheet { flex: 1; min-height: 0; margin: 3px 3px 3px 2px; padding: 1px 0; border: 1px solid #aaa; }
.sheet table { border-collapse: collapse; table-layout: fixed; width: 525px; font-family: "Noto Sans Mono CJK SC", "Liberation Mono", "Noto Sans CJK SC", monospace; }
.c-no { width: 21px; } .c-name { width: 191px; } .c-val { width: 281px; } .c-add { width: 31px; }
.sheet th, .sheet td { height: 19px; line-height: 16px; padding: 0 0 0 1px; border: 1px solid #c0c0c0; font-weight: 400; white-space: nowrap; }
.sheet th { padding: 0; background: linear-gradient(#fff, #efefef); text-align: center; }
.sheet tbody th { border-left: 0; background: linear-gradient(90deg, #fff, #efefef); }
.sheet thead th { height: 22px; border-top: 0; }
.sheet thead th:first-child { border-left: 0; }
.sheet thead .hot { background: linear-gradient(#fbdca4, #f2c05e); color: #5a0050; }
.sheet .name { padding-left: 20px; }
.key { color: #00f; }
.sheet .active th { background: #ffd08b; color: #5a0050; }
.active .name { background: #0078d7; color: #fff; }
.active td:nth-child(3) { background: #d9eaf8; }
.sheet .chk { padding: 0; }
.chk input { appearance: none; display: block; width: 13px; height: 13px; margin: 0 auto; border: 1px solid #333; background: #fff; }
.sheet .group { padding-left: 3px; color: #808080; }
.group div { display: flex; align-items: center; gap: 4px; }
.group button { width: 13px; height: 13px; border: 1px solid #aaa; }
.group svg { width: 11px; height: 11px; stroke: #000; }

/* status bar */
.status { display: flex; gap: 2px; flex: none; height: 20px; font-family: "Noto Sans Mono CJK SC", "Liberation Mono", "Noto Sans CJK SC", monospace; }
.status span { border: 1px solid #d3d3d3; background: linear-gradient(#fff, #f0f0f0); line-height: 18px; padding-left: 1px; white-space: nowrap; }
.s1 { width: 148px; } .s2 { width: 78px; } .s3 { width: 98px; } .s4 { width: 48px; } .s5 { flex: 1; } .s6 { width: 70px; }

/* taskbar */
.taskbar { display: flex; align-items: stretch; flex: none; height: 40px; background: #06171b; color: #fff; }
.taskbar button { display: grid; place-items: center; flex: none; }
.start { width: 48px; background: #000; }
.start svg { width: 16px; height: 16px; }
.cortana { width: 344px; display: flex; align-items: center; gap: 9px; padding: 0 14px 0 9px; background: #f1f1f1; }
.cortana input, .iebox input { flex: 1; min-width: 0; border: 0; padding: 0; background: none; outline: 0; }
.cortana input { font-size: 14px; color: #222; }
.cortana input::placeholder { color: #333; opacity: 1; }
.ringic { width: 22px; height: 22px; }
.mic { width: 12px; height: 18px; }
.tv { width: 48px; }
.pin { width: 52px; }
.iebox { width: 150px; display: flex; align-items: center; gap: 3px; margin: 5px 0; padding: 0 6px 0 3px; border: 1px solid #6d6d6d; background: #444; }
.iebox input::placeholder { color: #a8a8a8; opacity: 1; }
.swirl { width: 52px; }
.app-ic { width: 42px; background: linear-gradient(#76b9ed, #76b9ed) center bottom / 34px 2px no-repeat; }
.app-ic svg { width: 24px; height: 24px; }
.taskbar .on { background-color: #3a4b50; background-size: 42px 2px; }
.pdf { font: 700 9px "Liberation Sans", sans-serif; fill: #fff; }
.pager { width: 17px; margin-left: 2px; display: grid; place-items: center; background: linear-gradient(#f1f1f1 23px, #dadada 23px); color: #444; }
.pager svg { width: 9px; height: 6px; }
.pager svg:last-child { color: #000; }
.tray { margin-left: auto; display: flex; align-items: center; }
.tray svg { fill: none; stroke: #fff; }
.w48 { width: 48px; } .w22 { width: 22px; } .w27 { width: 27px; } .w26 { width: 26px; } .w28 { width: 28px; } .w33 { width: 33px; }
.cpu { width: 78px; } .clock { width: 73px; }
.cpu, .clock { display: grid; text-align: center; line-height: 18px; }
.ime { width: 26px; text-align: center; font-size: 19px; }
.note { width: 49px; position: relative; }
.note svg { margin-right: 12px; margin-bottom: 4px; }
.note b { position: absolute; left: 19px; top: 8px; width: 17px; height: 17px; border: 1px solid #888; border-radius: 50%; background: #2b3336; font: 700 12px/15px "Noto Sans", sans-serif; }
.peek { width: 5px; height: 40px; border-left: 1px solid #5b6a6e; }

/* hand-drawn ring over the value column */
.mark { position: absolute; left: 519px; top: 98px; width: 122px; height: 290px; pointer-events: none; }
```
